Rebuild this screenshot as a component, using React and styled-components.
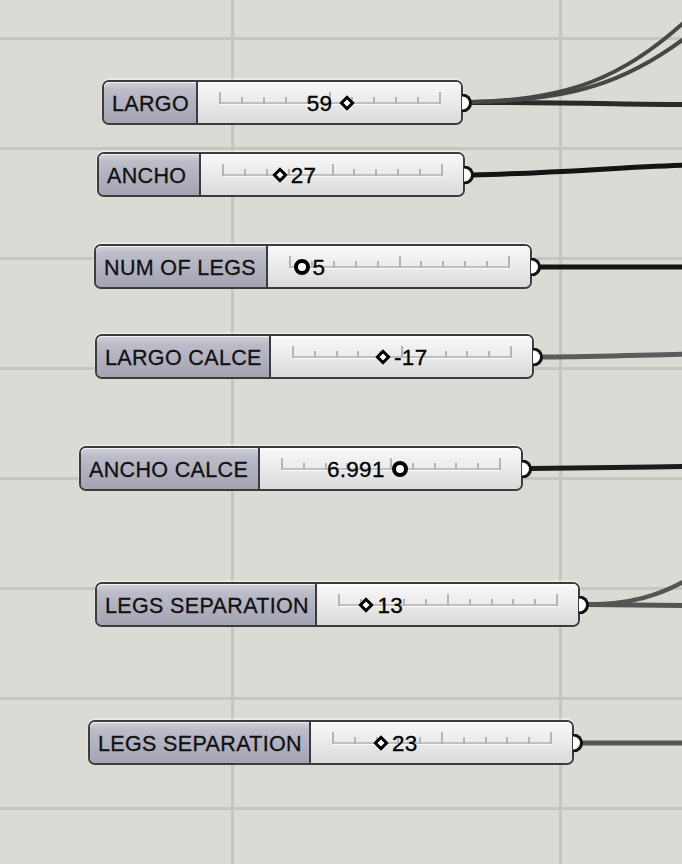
import React from 'react';
import styled, { createGlobalStyle } from 'styled-components';

const Global = createGlobalStyle`
  html, body { margin: 0; padding: 0; background: #dcdad4; }
  #root { width: 682px; height: 864px; }
`;

const Canvas = styled.div`
  position: relative;
  width: 682px;
  height: 864px;
  overflow: hidden;
  background-color: #dcdad4;
  background-image:
    linear-gradient(to bottom, #c8c5bf 0, #c8c5bf 3px, transparent 3px),
    linear-gradient(to right, #c8c5bf 0, #c8c5bf 3px, transparent 3px);
  background-size: 100% 110px, 328px 100%;
  background-position: 0 37px, 231px 0;
  font-family: "Liberation Sans", Arial, sans-serif;
`;

const Wires = styled.svg`
  position: absolute;
  left: 0;
  top: 0;
  width: 682px;
  height: 864px;
`;

const Node = styled.div`
  position: absolute;
  left: ${(p) => p.$x}px;
  top: ${(p) => p.$y}px;
  width: ${(p) => p.$w}px;
  height: 45px;
  box-sizing: border-box;
  display: flex;
  border: 2px solid #3c3c3c;
  border-radius: 7px;
  box-shadow: 0 -1px 0 0.5px rgba(255, 255, 255, 0.55);
`;

const Label = styled.div`
  width: ${(p) => p.$w}px;
  box-sizing: border-box;
  flex: none;
  display: flex;
  align-items: center;
  padding-left: 8px;
  padding-top: 4px;
  border-right: 2px solid #3c3c3c;
  border-radius: 5px 0 0 5px;
  background: linear-gradient(#d3d3dc 0%, #bdbcc9 18%, #b0afbe 60%, #a4a3b2 100%);
  box-shadow: inset 0 1px 0 rgba(255, 255, 255, 0.7);
  font-size: 21.5px;
  letter-spacing: 0.35px;
  -webkit-text-stroke: 0.3px #111;
  color: #111;
  white-space: nowrap;
`;

const Slider = styled.div`
  flex: 1;
  display: flex;
  align-items: center;
  padding: 0 21px 0 22px;
  border-radius: 0 5px 5px 0;
  background: linear-gradient(#f8f8f8 0%, #ececec 45%, #dadada 100%);
  box-shadow: inset 0 1px 0 #fff;
`;

const Track = styled.div`
  position: relative;
  flex: 1;
  height: 2px;
  background: #c0c0c0;
  box-shadow: 0 1px 0 rgba(255, 255, 255, 0.8);
`;

const Tick = styled.div`
  position: absolute;
  bottom: 0;
  width: 2px;
  margin-left: -1px;
  height: ${(p) => (p.$major ? 12 : 7)}px;
  background: #b5b5b5;
`;

const Diamond = styled.div`
  position: absolute;
  top: 50%;
  width: 11px;
  height: 11px;
  box-sizing: border-box;
  border: 3px solid #000;
  background: #fff;
  transform: translate(-50%, -50%) rotate(45deg);
`;

const Dot = styled.div`
  position: absolute;
  top: 50%;
  width: 16px;
  height: 16px;
  box-sizing: border-box;
  border: 4px solid #000;
  border-radius: 50%;
  background: #fff;
  transform: translate(-50%, -50%);
`;

const Value = styled.div`
  position: absolute;
  top: 50%;
  transform: translateY(-44%);
  font-size: 22.5px;
  letter-spacing: 0.3px;
  -webkit-text-stroke: 0.3px #000;
  color: #000;
  white-space: nowrap;
  line-height: 1;
`;

const Connector = styled.div`
  position: absolute;
  right: -11px;
  top: 50%;
  width: 10px;
  height: 19px;
  box-sizing: border-box;
  transform: translateY(-50%);
  border: 3px solid #111;
  border-left: none;
  border-radius: 0 10px 10px 0;
  background: #fff;
`;

const nodes = [
  { name: 'LARGO', x: 102, y: 80, div: 198, right: 463, value: '59', pct: 57.9, grip: 'diamond', side: 'left' },
  { name: 'ANCHO', x: 97, y: 152, div: 201, right: 465, value: '27', pct: 25.9, grip: 'diamond', side: 'right' },
  { name: 'NUM OF LEGS', x: 94, y: 244, div: 268, right: 532, value: '5', pct: 5.3, grip: 'dot', side: 'right' },
  { name: 'LARGO CALCE', x: 95, y: 334, div: 271, right: 534, value: '-17', pct: 41.3, grip: 'diamond', side: 'right' },
  { name: 'ANCHO CALCE', x: 79, y: 446, div: 260, right: 523, value: '6.991', pct: 54, grip: 'dot', side: 'left' },
  { name: 'LEGS SEPARATION', x: 95, y: 582, div: 317, right: 580, value: '13', pct: 12.6, grip: 'diamond', side: 'right' },
  { name: 'LEGS SEPARATION', x: 88, y: 720, div: 311, right: 574, value: '23', pct: 22, grip: 'diamond', side: 'right' },
];

const wires = [
  { d: 'M470 102.5 C 560 102.5, 620 104, 690 104.5', c: '#2a2a2a', w: 5 },
  { d: 'M470 102 C 565 100, 625 80, 695 12', c: '#474747', w: 4 },
  { d: 'M470 102 C 565 101, 630 86, 705 22', c: '#474747', w: 4 },
  { d: 'M472 175 C 560 173, 620 167, 690 165', c: '#141414', w: 5 },
  { d: 'M540 267 L 690 267', c: '#141414', w: 5 },
  { d: 'M542 357 C 600 356.5, 640 355, 690 354', c: '#5c5c5c', w: 5 },
  { d: 'M531 468.5 C 600 468, 640 467, 690 466.5', c: '#1c1c1c', w: 5 },
  { d: 'M588 604.5 C 630 604, 660 596, 690 578', c: '#555', w: 4.5 },
  { d: 'M588 604.5 L 690 605.5', c: '#555', w: 5 },
  { d: 'M582 743 L 690 743', c: '#555', w: 5 },
];

function NumberSlider({ n }) {
  const labelW = n.div - n.x - 2;
  const GripEl = n.grip === 'dot' ? Dot : Diamond;
  const gap = n.side === 'left' ? 15 : 11;
  const valueStyle =
    n.side === 'left'
      ? { right: `calc(${100 - n.pct}% + ${gap}px)` }
      : { left: `calc(${n.pct}% + ${gap}px)` };
  return (
    <Node $x={n.x} $y={n.y} $w={n.right - n.x}>
      <Label $w={labelW}>{n.name}</Label>
      <Slider>
        <Track>
          {Array.from({ length: 11 }, (_, i) => (
            <Tick key={i} $major={i % 5 === 0} style={{ left: `${i * 10}%` }} />
          ))}
          <GripEl style={{ left: `${n.pct}%` }} />
          <Value style={valueStyle}>{n.value}</Value>
        </Track>
      </Slider>
      <Connector />
    </Node>
  );
}

export default function App() {
  return (
    <>
      <Global />
      <Canvas>
        <Wires viewBox="0 0 682 864">
          {wires.map((w, i) => (
            <path key={i} d={w.d} stroke={w.c} strokeWidth={w.w} fill="none" strokeLinecap="round" />
          ))}
        </Wires>
        {nodes.map((n, i) => (
          <NumberSlider key={i} n={n} />
        ))}
      </Canvas>
    </>
  );
}
